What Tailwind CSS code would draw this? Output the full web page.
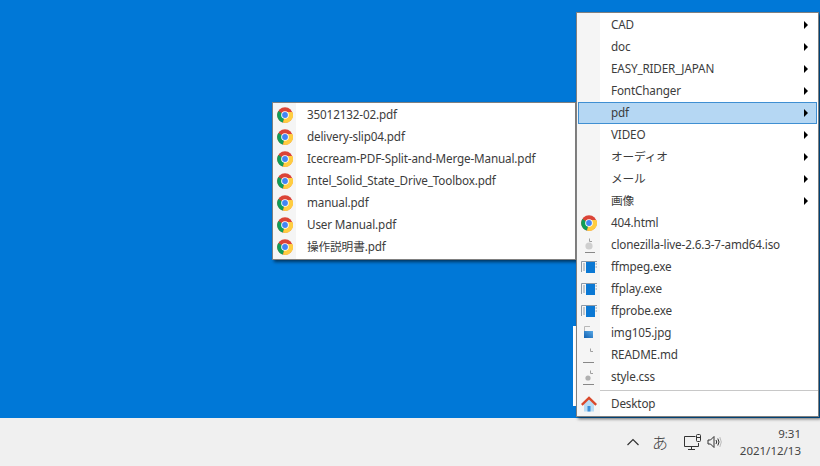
<!DOCTYPE html>
<html lang="en">
<head>
    <meta charset="UTF-8">
    <title>Desktop menu</title>
    <script src="https://cdn.jsdelivr.net/npm/@tailwindcss/browser@4"></script>
</head>
<body class="w-[820px] h-[466px] overflow-hidden relative flex flex-col bg-[#0078d7] text-[11.7px] tracking-[-0.15px] text-[#3c3c3c] font-['Noto_Sans','Noto_Sans_CJK_JP',sans-serif]">
    <svg width="0" height="0" class="absolute">
        <defs>
            <g id="chrome">
                <circle cx="8" cy="8" r="7.8" fill="#db4437"/>
                <path d="M8 8 L1.3 4 A7.8 7.8 0 0 0 6 15.6 L8 8Z" fill="#0f9d58"/>
                <path d="M8 8 L6 15.6 A7.8 7.8 0 0 0 15.4 5 L8 5Z" fill="#ffcd40"/>
                <circle cx="8" cy="8" r="3.8" fill="#fff"/>
                <circle cx="8" cy="8" r="2.9" fill="#4285f4"/>
            </g>
            <g id="exe">
                <path d="M0.5 13V2.5H16" fill="none" stroke="#8c9aa8"/>
                <rect x="5" y="3" width="9" height="11" fill="#0a78d4"/>
                <path d="M2 5h2M2 7h2M2 9h2M2 11h2M14.5 5h1.5M14.5 8h1.5" stroke="#8c9aa8"/>
            </g>
            <linearGradient id="jpg" x1="1" y1="0" x2="0" y2="1">
                <stop offset="0" stop-color="#5aa9e6"/>
                <stop offset="1" stop-color="#0f5fb0"/>
            </linearGradient>
        </defs>
    </svg>

    <div class="h-[418px] shrink-0"></div>

    <!-- taskbar -->
    <div class="h-[48px] bg-[#f0f0f0] flex items-center justify-end text-[#444]">
        <svg width="14" height="10" viewBox="0 0 14 10" fill="none" stroke="#333" stroke-width="1.2" class="mr-[12px]"><path d="M1.5 8 L7 2.5 L12.5 8"/></svg>
        <span class="text-[16px] tracking-normal leading-none mr-[15px] font-['Noto_Sans_CJK_JP',sans-serif] font-light">あ</span>
        <svg width="20" height="18" viewBox="0 0 20 18" fill="none" stroke="#333" class="mr-[4px]">
            <path d="M12.5 3.5H1.5V13.5H15.5V10M8.5 13.5V16.5M5 16.5H12"/>
            <rect x="13.5" y="1.5" width="4" height="7" rx="1"/>
            <path d="M13.5 4.5h4"/>
        </svg>
        <svg width="16" height="14" viewBox="0 0 16 14" fill="none" stroke="#333" class="mr-[17px]">
            <path d="M1 5H3.5L7 1.5V12.5L3.5 9H1Z"/>
            <path d="M9 5Q10.5 7 9 9M10.8 3.5Q13.2 7 10.8 10.5"/>
            <path d="M12.8 2Q15.8 7 12.8 12" stroke="#bbb"/>
        </svg>
        <div class="flex flex-col items-end w-[80px] pr-[19px] text-[11.5px] tracking-normal leading-[17px]">
            <span>9:31</span>
            <span>2021/12/13</span>
        </div>
    </div>

    <!-- strip of a window behind the menu -->
    <div class="absolute left-[573px] top-[326px] w-[4px] h-[80px] bg-white"></div>

    <!-- pdf submenu -->
    <div class="absolute left-[272px] top-[102px] w-[304px] bg-white border border-[#808080] py-[1px] shadow-[2px_2px_3px_rgba(0,0,0,0.55)]">
        <div class="absolute left-0 top-0 bottom-0 w-[23px] bg-[#f5f5f5]"></div>
        <div class="relative flex flex-col">
            <div class="h-[22px] flex items-center"><svg width="16" height="16" class="ml-[4px] mr-[14px]"><use href="#chrome"/></svg><span>35012132-02.pdf</span></div>
            <div class="h-[22px] flex items-center"><svg width="16" height="16" class="ml-[4px] mr-[14px]"><use href="#chrome"/></svg><span>delivery-slip04.pdf</span></div>
            <div class="h-[22px] flex items-center"><svg width="16" height="16" class="ml-[4px] mr-[14px]"><use href="#chrome"/></svg><span>Icecream-PDF-Split-and-Merge-Manual.pdf</span></div>
            <div class="h-[22px] flex items-center"><svg width="16" height="16" class="ml-[4px] mr-[14px]"><use href="#chrome"/></svg><span>Intel_Solid_State_Drive_Toolbox.pdf</span></div>
            <div class="h-[22px] flex items-center"><svg width="16" height="16" class="ml-[4px] mr-[14px]"><use href="#chrome"/></svg><span>manual.pdf</span></div>
            <div class="h-[22px] flex items-center"><svg width="16" height="16" class="ml-[4px] mr-[14px]"><use href="#chrome"/></svg><span>User Manual.pdf</span></div>
            <div class="h-[22px] flex items-center"><svg width="16" height="16" class="ml-[4px] mr-[14px]"><use href="#chrome"/></svg><span>操作説明書.pdf</span></div>
        </div>
    </div>

    <!-- main menu -->
    <div class="absolute left-[576px] top-[12px] w-[243px] h-[405px] bg-white border border-[#808080] py-[1px] shadow-[2px_2px_3px_rgba(0,0,0,0.55)]">
        <div class="absolute left-0 top-0 bottom-0 w-[23px] bg-[#f5f5f5]"></div>
        <div class="relative flex flex-col">
            <div class="h-[22px] mx-[1px] flex items-center justify-between pl-[33px] pr-[9px]"><span>CAD</span><span class="border-y-[4px] border-l-[4px] border-y-transparent border-l-black"></span></div>
            <div class="h-[22px] mx-[1px] flex items-center justify-between pl-[33px] pr-[9px]"><span>doc</span><span class="border-y-[4px] border-l-[4px] border-y-transparent border-l-black"></span></div>
            <div class="h-[22px] mx-[1px] flex items-center justify-between pl-[33px] pr-[9px]"><span>EASY_RIDER_JAPAN</span><span class="border-y-[4px] border-l-[4px] border-y-transparent border-l-black"></span></div>
            <div class="h-[22px] mx-[1px] flex items-center justify-between pl-[33px] pr-[9px]"><span>FontChanger</span><span class="border-y-[4px] border-l-[4px] border-y-transparent border-l-black"></span></div>
            <div class="h-[22px] mx-[1px] flex items-center justify-between pl-[33px] pr-[9px] bg-[#b5d7f3] outline outline-[#3f8fd2] -outline-offset-1"><span>pdf</span><span class="border-y-[4px] border-l-[4px] border-y-transparent border-l-black"></span></div>
            <div class="h-[22px] mx-[1px] flex items-center justify-between pl-[33px] pr-[9px]"><span>VIDEO</span><span class="border-y-[4px] border-l-[4px] border-y-transparent border-l-black"></span></div>
            <div class="h-[22px] mx-[1px] flex items-center justify-between pl-[33px] pr-[9px]"><span>オーディオ</span><span class="border-y-[4px] border-l-[4px] border-y-transparent border-l-black"></span></div>
            <div class="h-[22px] mx-[1px] flex items-center justify-between pl-[33px] pr-[9px]"><span>メール</span><span class="border-y-[4px] border-l-[4px] border-y-transparent border-l-black"></span></div>
            <div class="h-[22px] mx-[1px] flex items-center justify-between pl-[33px] pr-[9px]"><span>画像</span><span class="border-y-[4px] border-l-[4px] border-y-transparent border-l-black"></span></div>
            <div class="h-[22px] flex items-center"><svg width="16" height="16" class="ml-[4px] mr-[14px]"><use href="#chrome"/></svg><span>404.html</span></div>
            <div class="h-[22px] flex items-center">
                <svg width="16" height="16" viewBox="0 0 16 16" class="ml-[4px] mr-[14px]"><circle cx="8" cy="9" r="3.6" fill="#cfcfcf"/><path d="M8.5 1.5v3h2.5" fill="none" stroke="#a0a0a0"/><path d="M4 15.5h10" stroke="#888"/></svg>
                <span>clonezilla-live-2.6.3-7-amd64.iso</span>
            </div>
            <div class="h-[22px] flex items-center"><svg width="16" height="16" class="ml-[4px] mr-[14px]"><use href="#exe"/></svg><span>ffmpeg.exe</span></div>
            <div class="h-[22px] flex items-center"><svg width="16" height="16" class="ml-[4px] mr-[14px]"><use href="#exe"/></svg><span>ffplay.exe</span></div>
            <div class="h-[22px] flex items-center"><svg width="16" height="16" class="ml-[4px] mr-[14px]"><use href="#exe"/></svg><span>ffprobe.exe</span></div>
            <div class="h-[22px] flex items-center">
                <svg width="16" height="16" viewBox="0 0 16 16" class="ml-[4px] mr-[14px]"><path d="M3.5 6V1.5H9" fill="none" stroke="#b8b8b8"/><rect x="3" y="6" width="9" height="7" fill="url(#jpg)"/></svg>
                <span>img105.jpg</span>
            </div>
            <div class="h-[22px] flex items-center">
                <svg width="16" height="16" viewBox="0 0 16 16" fill="none" class="ml-[4px] mr-[14px]"><path d="M9.5 1.5v3H12" stroke="#a0a0a0"/><path d="M2 15.5h11" stroke="#888"/></svg>
                <span>README.md</span>
            </div>
            <div class="h-[22px] flex items-center">
                <svg width="16" height="16" viewBox="0 0 16 16" fill="none" class="ml-[4px] mr-[14px]"><circle cx="7" cy="9" r="2.6" fill="#b0b0b0"/><path d="M9.5 1.5v3H12" stroke="#a0a0a0"/><path d="M2 15.5h11" stroke="#888"/></svg>
                <span>style.css</span>
            </div>
            <div class="h-[1px] bg-[#c8c8c8] ml-[23px] my-[2px]"></div>
            <div class="h-[22px] flex items-center">
                <svg width="16" height="16" viewBox="0 0 16 16" class="ml-[4px] mr-[14px]">
                    <path d="M3 8V15.5H13V8L8 3.5Z" fill="#b8dcf5"/>
                    <rect x="6.5" y="10" width="3" height="5.5" fill="#3b8ed8"/>
                    <path d="M0.8 8.8L8 2L15.2 8.8" fill="none" stroke="#d9482b" stroke-width="2.4"/>
                </svg>
                <span>Desktop</span>
            </div>
        </div>
    </div>
</body>
</html>
